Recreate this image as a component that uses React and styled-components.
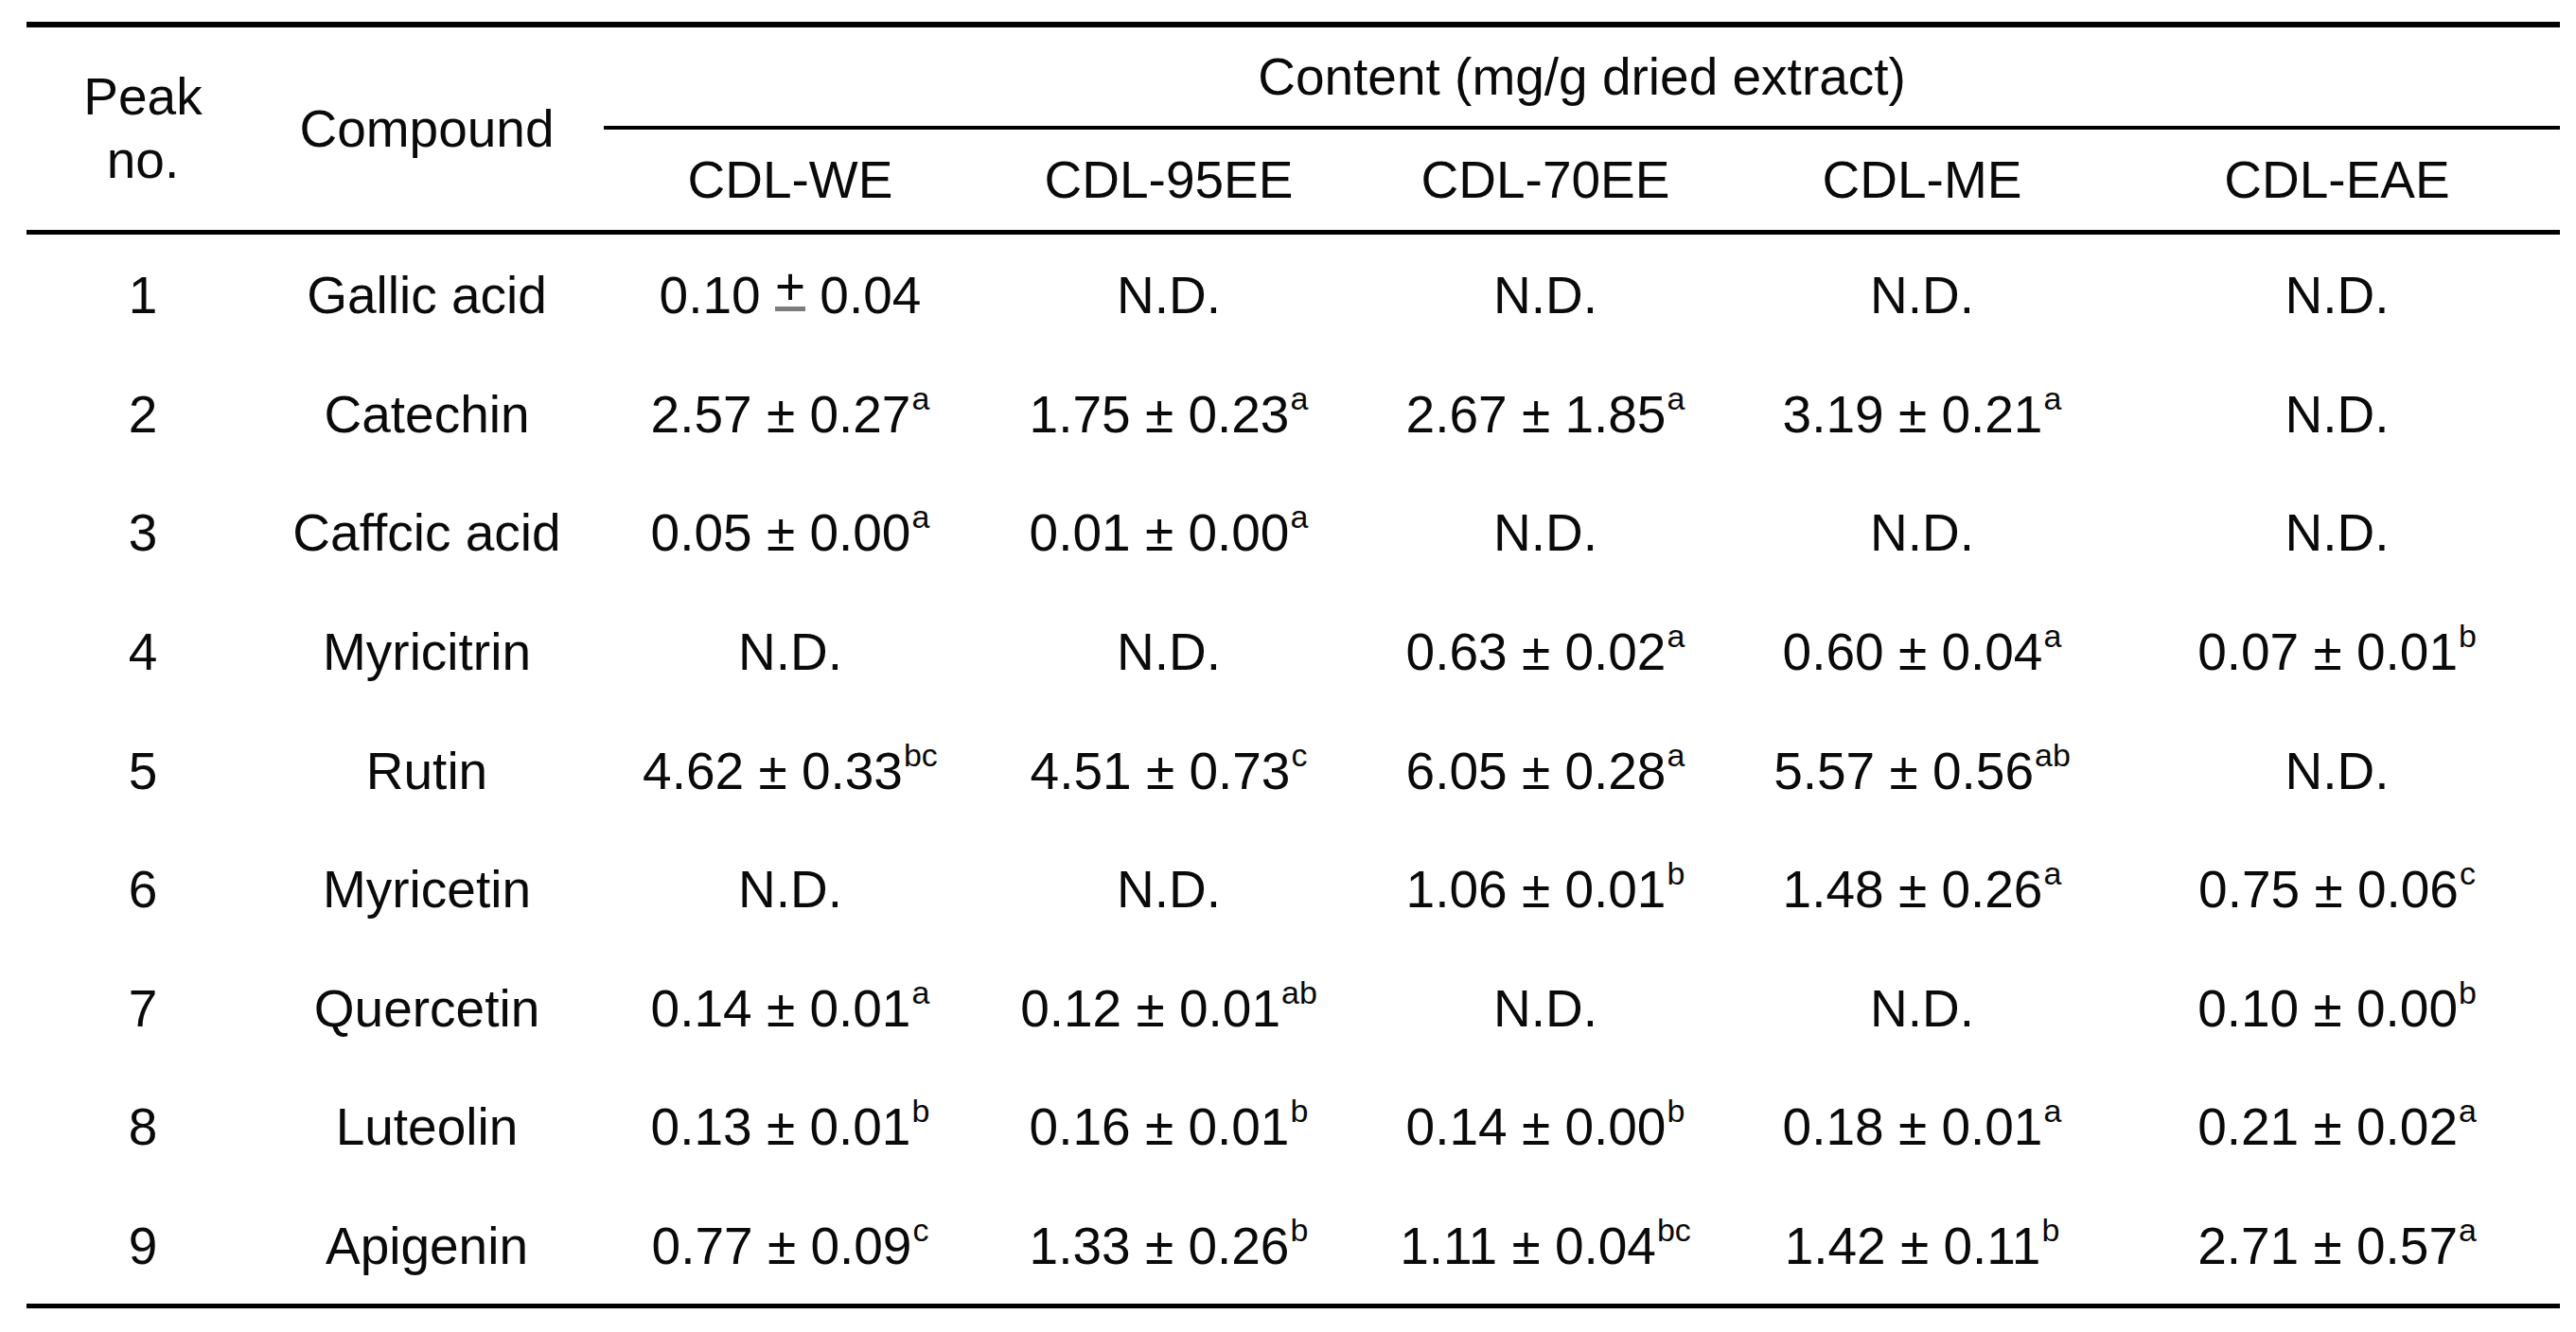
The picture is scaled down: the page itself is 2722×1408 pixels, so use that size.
import React from "react";
import styled, { createGlobalStyle } from "styled-components";

const GlobalStyle = createGlobalStyle`
  html, body {
    margin: 0;
    padding: 0;
    background: #ffffff;
  }
  body {
    font-family: "Liberation Sans", Arial, sans-serif;
    color: #0a0a0a;
  }
`;

const Page = styled.div`
  width: 2722px;
  height: 1408px;
  padding: 23px 0 0 28px;
  box-sizing: border-box;
`;

const Table = styled.table`
  width: 2677px;
  table-layout: fixed;
  border-collapse: separate;
  border-spacing: 0;
  font-size: 55px;
`;

const HeadRow = styled.tr`
  height: ${(p) => p.$h}px;
`;

const HeadCell = styled.th`
  font-weight: normal;
  text-align: center;
  vertical-align: middle;
  padding: 0 ${(p) => p.$padRight || 0}px 0 0;
  line-height: 67px;
  border-top: ${(p) => (p.$top ? "6px solid #000" : "none")};
  border-bottom: ${(p) => (p.$bottom ? `${p.$bottom}px solid #000` : "none")};
`;

const BodyRow = styled.tr`
  height: ${(p) => (p.$last ? 130.6 : 125.6)}px;
`;

const Cell = styled.td`
  text-align: center;
  vertical-align: middle;
  padding: 3px ${(p) => p.$padRight || 0}px 0 0;
  line-height: 60px;
  white-space: nowrap;
  border-bottom: ${(p) => (p.$last ? "5px solid #000" : "none")};
`;

const Sup = styled.span`
  font-size: 34px;
  line-height: 0;
  vertical-align: 24px;
  margin-left: 1px;
`;

// the first value carries a looser, lighter ± in the source table
const OddSign = styled.span`
  display: inline-block;
  line-height: 38px;
  padding-bottom: 2px;
  border-bottom: 5px solid #7d7d7d;
  vertical-align: 9px;
`;

const columns = ["CDL-WE", "CDL-95EE", "CDL-70EE", "CDL-ME", "CDL-EAE"];
const widths = [246, 364, 394, 406, 390, 406, 471];

const ND = "N.D.";

const rows = [
  ["1", "Gallic acid", "odd", ND, ND, ND, ND],
  ["2", "Catechin", ["2.57", "0.27", "a"], ["1.75", "0.23", "a"], ["2.67", "1.85", "a"], ["3.19", "0.21", "a"], ND],
  ["3", "Caffcic acid", ["0.05", "0.00", "a"], ["0.01", "0.00", "a"], ND, ND, ND],
  ["4", "Myricitrin", ND, ND, ["0.63", "0.02", "a"], ["0.60", "0.04", "a"], ["0.07", "0.01", "b"]],
  ["5", "Rutin", ["4.62", "0.33", "bc"], ["4.51", "0.73", "c"], ["6.05", "0.28", "a"], ["5.57", "0.56", "ab"], ND],
  ["6", "Myricetin", ND, ND, ["1.06", "0.01", "b"], ["1.48", "0.26", "a"], ["0.75", "0.06", "c"]],
  ["7", "Quercetin", ["0.14", "0.01", "a"], ["0.12", "0.01", "ab"], ND, ND, ["0.10", "0.00", "b"]],
  ["8", "Luteolin", ["0.13", "0.01", "b"], ["0.16", "0.01", "b"], ["0.14", "0.00", "b"], ["0.18", "0.01", "a"], ["0.21", "0.02", "a"]],
  ["9", "Apigenin", ["0.77", "0.09", "c"], ["1.33", "0.26", "b"], ["1.11", "0.04", "bc"], ["1.42", "0.11", "b"], ["2.71", "0.57", "a"]],
];

const Value = ({ v }) => {
  if (v === "odd") {
    return (
      <>
        0.10 <OddSign>+</OddSign> 0.04
      </>
    );
  }
  if (typeof v === "string") return v;
  const [mean, sd, letter] = v;
  return (
    <>
      {mean} ± {sd}
      <Sup>{letter}</Sup>
    </>
  );
};

const App = () => {
  return (
    <>
      <GlobalStyle />
      <Page>
        <Table>
          <colgroup>
            {widths.map((w, i) => (
              <col key={i} style={{ width: w }} />
            ))}
          </colgroup>
          <thead>
            <HeadRow $h={114}>
              <HeadCell rowSpan={2} $top $bottom={5}>
                Peak
                <br />
                no.
              </HeadCell>
              <HeadCell rowSpan={2} $top $bottom={5} $padRight={10}>
                Compound
              </HeadCell>
              <HeadCell colSpan={5} $top $bottom={4}>
                Content (mg/g dried extract)
              </HeadCell>
            </HeadRow>
            <HeadRow $h={111}>
              {columns.map((c) => (
                <HeadCell key={c} $bottom={5}>
                  {c}
                </HeadCell>
              ))}
            </HeadRow>
          </thead>
          <tbody>
            {rows.map((r, i) => {
              const last = i === rows.length - 1;
              return (
                <BodyRow key={r[0]} $last={last}>
                  {r.map((v, j) => (
                    <Cell key={j} $last={last} $padRight={j === 1 ? 10 : 0}>
                      <Value v={v} />
                    </Cell>
                  ))}
                </BodyRow>
              );
            })}
          </tbody>
        </Table>
      </Page>
    </>
  );
};

export default App;
